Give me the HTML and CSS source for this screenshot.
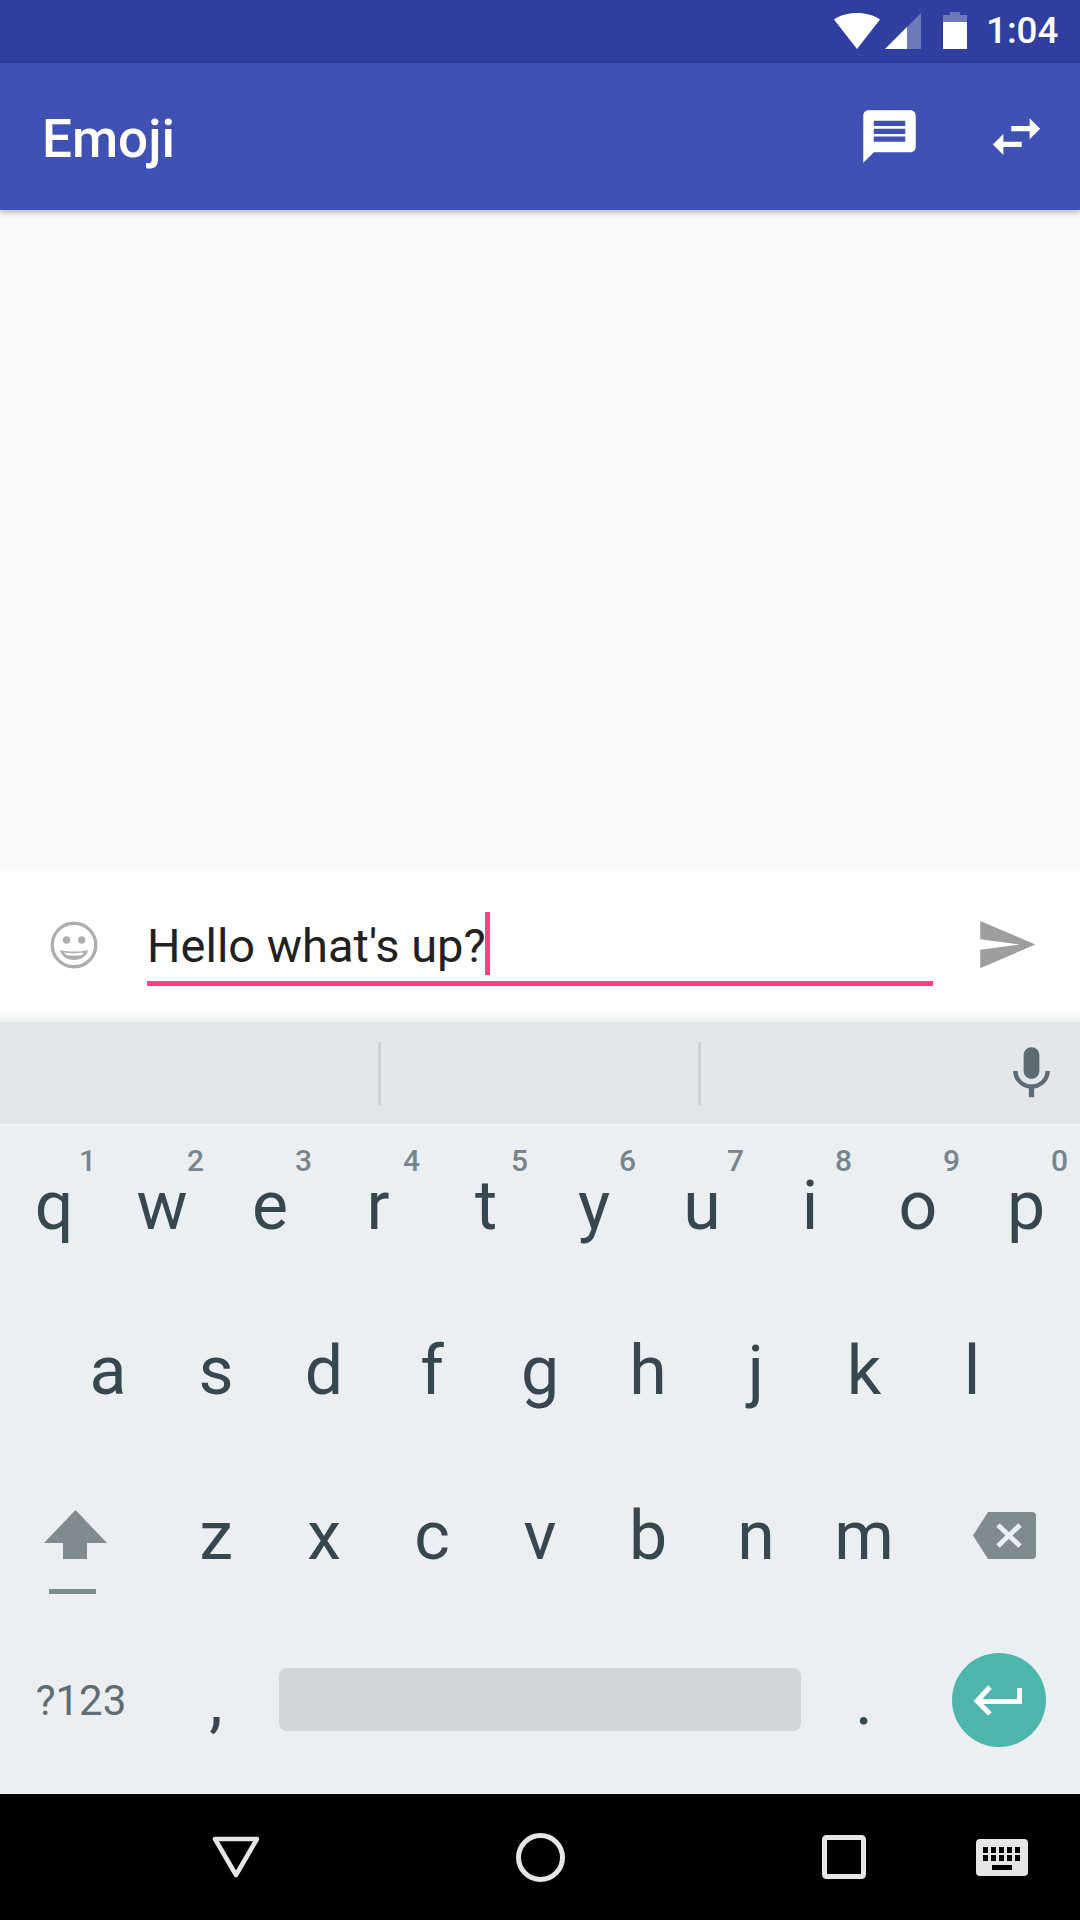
FILE: index.html
```html
<!DOCTYPE html>
<html lang="en">
<head>
<meta charset="utf-8">
<title>Emoji</title>
<link rel="stylesheet" href="styles.css">
</head>
<body>
<div class="screen">
  <header class="status-bar">
    <svg class="wifi" viewBox="0 0 46 36"><path fill="#fff" d="M0 6.500C6 2.200 14 0 23 0s17 2.200 23 6.500L23 36z"/></svg>
    <svg class="signal" viewBox="0 0 36 36"><path fill="#fff" fill-opacity=".3" d="M36 0V36H0z"/><path fill="#fff" d="M22 14V36H0z"/></svg>
    <svg class="battery" viewBox="0 0 24 37"><path fill="#fff" fill-opacity=".3" d="M7 0h10v3h7v7H0V3h7z"/><path fill="#fff" d="M0 10h24v27H0z"/></svg>
    <span class="clock">1:04</span>
  </header>
  <div class="app-bar">
    <h1 class="title">Emoji</h1>
    <svg class="action chat" viewBox="0 0 24 24"><path fill="#fff" d="M20 2H4c-1.100 0-1.990.9-1.990 2L2 22l4-4h14c1.100 0 2-.9 2-2V4c0-1.100-.9-2-2-2zm-2 12H6v-2h12v2zm0-3H6V9h12v2zm0-3H6V6h12v2z"/></svg>
    <svg class="action swap" viewBox="0 0 24 24"><path fill="#fff" d="M6.990 11L3 15l3.990 4v-3H14v-2H6.990v-3zM21 9l-4-4v3h-7v2h7v3l4-4z"/></svg>
  </div>
  <main class="content"></main>
  <section class="composer">
    <svg class="smiley" viewBox="0 0 48 48">
      <circle cx="24" cy="24" r="21.800" fill="none" stroke="#aeaeae" stroke-width="3.400"/>
      <circle cx="16.500" cy="19" r="3.700" fill="#aeaeae"/>
      <circle cx="31.700" cy="19" r="3.700" fill="#aeaeae"/>
      <path fill="#aeaeae" d="M10 29c8 2 20 2 28 0c-1 6-7 10-14 10s-13-4-14-10z"/>
      <path fill="#fff" d="M14 31.500c6 1 14 1 20 0c-1 1.600-2 2.300-3 2.700c-4 .6-10 .6-14 0c-1-.4-2-1.100-3-2.700z"/>
    </svg>
    <div class="field">
      <span class="field-text">Hello what's up?</span><span class="caret"></span>
    </div>
    <svg class="send" viewBox="0 0 24 24"><path fill="#9e9e9e" d="M2.010 21L23 12 2.010 3 2 10l15 2-15 2z"/></svg>
  </section>
  <section class="keyboard">
    <div class="suggestions">
      <div class="slot"></div>
      <div class="slot"></div>
      <svg class="mic" viewBox="0 0 24 24"><path fill="#5d6b73" d="M12 14c1.660 0 2.990-1.340 2.990-3L15 5c0-1.660-1.340-3-3-3S9 3.340 9 5v6c0 1.660 1.340 3 3 3zm5.300-3c0 3-2.540 5.100-5.300 5.100S6.700 14 6.700 11H5c0 3.410 2.720 6.230 6 6.720V21h2v-3.280c3.280-.48 6-3.300 6-6.720h-1.700z"/></svg>
    </div>
    <div class="keys">
      <div class="row">
        <div class="key">q<sup class="hint">1</sup></div>
        <div class="key">w<sup class="hint">2</sup></div>
        <div class="key">e<sup class="hint">3</sup></div>
        <div class="key">r<sup class="hint">4</sup></div>
        <div class="key">t<sup class="hint">5</sup></div>
        <div class="key">y<sup class="hint">6</sup></div>
        <div class="key">u<sup class="hint">7</sup></div>
        <div class="key">i<sup class="hint">8</sup></div>
        <div class="key">o<sup class="hint">9</sup></div>
        <div class="key">p<sup class="hint">0</sup></div>
      </div>
      <div class="row">
        <div class="key">a</div><div class="key">s</div><div class="key">d</div><div class="key">f</div><div class="key">g</div><div class="key">h</div><div class="key">j</div><div class="key">k</div><div class="key">l</div>
      </div>
      <div class="row">
        <div class="key wide key-shift">
          <svg class="shift" viewBox="0 0 63 84"><path fill="#7f8b8f" d="M31.500 0L63 33H43V49H19V33H0z"/><path fill="#7f8b8f" d="M5 79H52V84H5z"/></svg>
        </div>
        <div class="key">z</div><div class="key">x</div><div class="key">c</div><div class="key">v</div><div class="key">b</div><div class="key">n</div><div class="key">m</div>
        <div class="key wide key-back">
          <svg class="backspace" viewBox="0 0 63 47"><path fill="#7f8b8f" d="M15 0H59a4 4 0 0 1 4 4V43a4 4 0 0 1-4 4H15L0 23.500z"/><path stroke="#eceff1" stroke-width="5" d="M25 13L47 34M47 13L25 34"/></svg>
        </div>
      </div>
      <div class="row">
        <div class="key wide symbols">?123</div>
        <div class="key">,</div>
        <div class="space-key"><div class="space-bar"></div></div>
        <div class="key">.</div>
        <div class="key wide">
          <div class="enter">
            <svg class="enter-arrow" viewBox="0 0 49 30"><path fill="none" stroke="#fff" stroke-width="5" d="M46.500 3V16.500H4M17 2L4 16 17 29"/></svg>
          </div>
        </div>
      </div>
    </div>
  </section>
  <nav class="nav-bar">
    <svg class="nav-back" viewBox="0 0 48 42"><path fill="none" stroke="#e6e6e6" stroke-width="4.500" stroke-linejoin="round" d="M3 3H45L24 39z"/></svg>
    <svg class="nav-home" viewBox="0 0 49 49"><circle cx="24.500" cy="24.500" r="22" fill="none" stroke="#e6e6e6" stroke-width="5"/></svg>
    <svg class="nav-recent" viewBox="0 0 44 44"><rect x="2.500" y="2.500" width="39" height="39" rx="2" fill="none" stroke="#e6e6e6" stroke-width="5"/></svg>
    <svg class="nav-ime" viewBox="0 0 52 37"><rect width="52" height="37" rx="4" fill="#e6e6e6"/><g fill="#000"><rect x="7" y="8" width="5" height="6"/><rect x="15" y="8" width="5" height="6"/><rect x="23" y="8" width="5" height="6"/><rect x="31" y="8" width="5" height="6"/><rect x="39" y="8" width="5" height="6"/><rect x="7" y="16" width="5" height="6"/><rect x="15" y="16" width="5" height="6"/><rect x="23" y="16" width="5" height="6"/><rect x="31" y="16" width="5" height="6"/><rect x="39" y="16" width="5" height="6"/><rect x="16" y="26" width="20" height="5"/></g></svg>
  </nav>
</div>
</body>
</html>
```

FILE: styles.css
```css
* { box-sizing: border-box; }
html, body { margin: 0; padding: 0; }
body { font-family: Roboto, "Noto Sans", sans-serif; background: #000; }
svg { display: block; flex: none; }

.screen { width: 1080px; height: 1920px; display: flex; flex-direction: column; overflow: hidden; }

.status-bar { height: 63px; background: #303f9f; display: flex; align-items: flex-start; padding: 13px 22px 0 834px; }
.wifi { width: 46px; height: 36px; }
.signal { width: 36px; height: 36px; margin-left: 5px; }
.battery { width: 24px; height: 37px; margin-left: 22px; margin-top: -1px; }
.clock { margin-left: 19px; color: #fff; font-size: 36.750px; font-weight: 500; line-height: 36px; }

.app-bar { height: 147px; background: #3f51b5; display: flex; align-items: center; padding: 0 32px 0 42px; position: relative; z-index: 2; box-shadow: 0 3px 6px rgba(0,0,0,.25); }
.title { margin: 5px 0 0; flex: 1; color: #fff; font-size: 53px; font-weight: 500; }
.action { width: 63px; height: 63px; }
.swap { margin-left: 64px; }

.content { height: 661px; background: #fafafa; }

.composer { height: 151px; background: linear-gradient(#fff 137px, #f0f1f2 151px); display: flex; align-items: flex-start; padding: 50px 0 0 50px; }
.smiley { width: 48px; height: 48px; }
.field { width: 786px; height: 74px; margin-left: 49px; margin-top: -9px; border-bottom: 5px solid #ff4081; display: flex; align-items: flex-start; }
.field-text { font-size: 47px; line-height: 67px; color: #212121; }
.caret { width: 5px; height: 63px; margin-left: -1px; background: #ff4081; }
.send { width: 63px; height: 63px; margin-left: 42px; margin-top: -8px; }

.keyboard { flex: 1; background: #eceff1; display: flex; flex-direction: column; }
.suggestions { height: 104px; background: #e3e7ea; border-bottom: 2px solid #f2f4f6; display: flex; align-items: center; padding-right: 17px; }
.slot { width: 320px; height: 63px; border-right: 3px solid #ccd1d5; }
.slot:first-child { width: 381px; }
.mic { width: 63px; height: 63px; margin-left: auto; }

.keys { flex: 1; display: flex; flex-direction: column; }
.row { height: 165px; padding-bottom: 6px; display: flex; justify-content: center; }
.key { width: 108px; position: relative; display: flex; align-items: center; justify-content: center; font-size: 68px; color: #37474f; line-height: 1; }
.key.wide { width: 162px; }
.key-shift { padding-right: 11px; }
.key-back { padding-left: 11px; }
.hint { position: absolute; top: 20px; right: 12px; font-size: 30px; font-weight: 500; line-height: 1; color: #78858c; vertical-align: baseline; }
.symbols { font-size: 42px; color: #5f6d74; }
.space-key { width: 540px; display: flex; align-items: center; justify-content: center; }
.space-bar { width: 522px; height: 63px; margin-top: -2px; background: #d1d5d8; border-radius: 8px; }
.enter { width: 94px; height: 94px; margin-top: -1px; padding-right: 4px; border-radius: 50%; background: #4db6ac; display: flex; align-items: center; justify-content: center; }
.enter-arrow { width: 49px; height: 30px; }
.shift { width: 63px; height: 84px; margin-top: 33px; }
.backspace { width: 63px; height: 47px; }

.nav-bar { height: 126px; background: #000; display: flex; align-items: center; padding-left: 212px; }
.nav-back { width: 48px; height: 42px; }
.nav-home { width: 49px; height: 49px; margin-left: 256px; }
.nav-recent { width: 44px; height: 44px; margin-left: 257px; }
.nav-ime { width: 52px; height: 37px; margin-left: 110px; }
```
